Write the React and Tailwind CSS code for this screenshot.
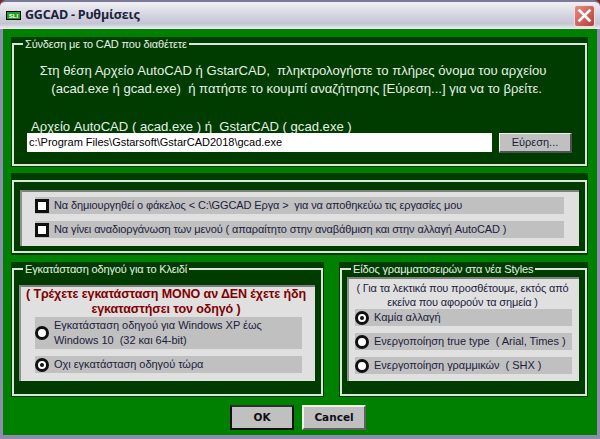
const Check = ({ label }) => (
  <div className="flex h-[17px] items-center bg-[#c0c0c0] tracking-[-0.12px] text-[#1c1c3c]">
    <span className="h-[14px] w-[14px] shrink-0 border-[3px] border-[#101010] bg-white" />
    <span className="ml-[5px] whitespace-pre">{label}</span>
  </div>
)

const Radio = ({ checked = false, lines }) => (
  <div className="flex items-center bg-[#c0c0c0] py-[1px] tracking-[-0.03px] text-[#1c1c3c]">
    <span className="flex h-[14px] w-[14px] shrink-0 items-center justify-center rounded-full border-[3px] border-[#101010] bg-white">
      {checked && <span className="h-[4px] w-[4px] rounded-full bg-[#101010]" />}
    </span>
    <span className="ml-[5px] whitespace-pre leading-[15px]">{lines}</span>
  </div>
)

const Group = ({ title, className = '', children }) => (
  <div className={`bg-[#003c00] px-[1px] pb-[1px] ${className}`}>
    <fieldset className="h-full border-2 border-[#dce6dc]">
      <legend className="ml-[9px] px-[2px] text-[11px] leading-[14px] tracking-[-0.15px] text-[#e8f0e8] whitespace-pre">{title}</legend>
      {children}
    </fieldset>
  </div>
)

const Panel = ({ className = '', children }) => (
  <div className={`border-t-2 border-l-2 border-t-[#808080] border-l-[#909090] bg-[#e0e0e0] ${className}`}>
    {children}
  </div>
)

const App = () => {
  return (
    <div className="flex h-[439px] w-[600px] flex-col overflow-hidden bg-[#8a2020] font-['Liberation_Sans',Arial,sans-serif] text-[11px]">
      <div className="flex h-[29px] shrink-0 items-center rounded-t-[6px] border-t-2 border-[#7a7a96] bg-gradient-to-b from-[#f0f0f4] via-[#c4c4d4] via-80% to-[#eeeef2] pl-[6px] pr-[5px]">
        <span className="flex h-[9px] w-[15px] items-center justify-center border border-black bg-[#20a020] text-[6px] font-bold leading-none text-white">SLI</span>
        <span className="ml-[4px] font-['Open_Sans',sans-serif] text-[12.5px] font-bold tracking-[-0.2px] text-[#20203c]">GGCAD - Ρυθμίσεις</span>
        <button className="ml-auto flex h-[22px] w-[21px] items-center justify-center rounded-[3px] border border-[#f0e0e0] bg-gradient-to-br from-[#e88a80] to-[#b83a3a]">
          <svg width="15" height="15" viewBox="0 0 15 15">
            <path d="M2.5 2.5 L12.5 12.5 M12.5 2.5 L2.5 12.5" stroke="#fff" strokeWidth="2.6" strokeLinecap="square" />
          </svg>
        </button>
      </div>

      <div className="flex flex-1 flex-col border-x-[3px] border-b-[4px] border-x-[#8c8cac] border-b-[#8c8cac] bg-[#008000] pl-[8px] pr-[5px] pt-[8px]">
        <Group title="Σύνδεση με το CAD που διαθέτετε" className="h-[130px] w-[577px]">
          <div className="pr-[13px] pt-[11px] text-center text-[13.1px] leading-[18px] text-[#e8f0e8] whitespace-pre">
            <p>Στη θέση Αρχείο AutoCAD ή GstarCAD,  πληκτρολογήστε το πλήρες όνομα του αρχείου</p>
            <p>  (acad.exe ή gcad.exe)  ή πατήστε το κουμπί αναζήτησης [Εύρεση...] για να το βρείτε.</p>
          </div>
          <p className="-mb-[1px] ml-[17px] mt-[22px] text-[13.1px] leading-[14px] text-[#e8f0e8] whitespace-pre">Αρχείο AutoCAD ( acad.exe ) ή  GstarCAD ( gcad.exe )</p>
          <div className="ml-[13px] flex gap-[7px]">
            <div className="flex h-[19px] w-[465px] items-center bg-white pl-[2px] text-black">c:\Program Files\Gstarsoft\GstarCAD2018\gcad.exe</div>
            <button className="h-[20px] w-[73px] border-b-2 border-r-2 border-t border-l border-b-[#505050] border-r-[#505050] border-t-[#f0f0f0] border-l-[#f0f0f0] bg-[#c0c0c0] text-[11px] text-[#1c1c3c]">Εύρεση...</button>
          </div>
        </Group>

        <div className="mt-[6px] h-[82px] w-[577px] bg-[#003c00] px-[1px] pb-[2px] pt-[7px]">
          <div className="h-full border-2 border-[#dce6dc] px-[6px] pb-[5px] pt-[8px]">
            <Panel className="flex h-[56px] flex-col gap-[7px] pl-[13px] pr-[15px] pt-[5px]">
              <Check label="Να δημιουργηθεί ο φάκελος < C:\GGCAD Εργα >  για να αποθηκεύω τις εργασίες μου" />
              <Check label="Να γίνει αναδιοργάνωση των μενού ( απαραίτητο στην αναβάθμιση και στην αλλαγή AutoCAD )" />
            </Panel>
          </div>
        </div>

        <div className="mt-[7px] flex h-[135px] w-[577px] gap-[15px]">
          <Group title="Εγκατάσταση οδηγού για το Κλειδί" className="w-[313px]">
            <Panel className="ml-[5px] mr-[6px] mt-[9px] h-[96px]">
              <div className="pr-[4px] text-center text-[12.5px] font-bold leading-[15px] tracking-[-0.1px] whitespace-nowrap text-[#800000]">
                <p>( Τρέχετε εγκατάσταση ΜΟΝΟ αν ΔΕΝ έχετε ήδη</p>
                <p>εγκαταστήσει τον οδηγό )</p>
              </div>
              <div className="flex flex-col gap-[7px] pl-[14px] pr-[13px]">
                <Radio lines={'Εγκατάσταση οδηγού για Windows XP έως\nWindows 10  (32 και 64-bit)'} />
                <Radio checked lines="Οχι εγκατάσταση οδηγού τώρα" />
              </div>
            </Panel>
          </Group>
          <Group title="Είδος γραμματοσειρών στα νέα Styles" className="w-[249px]">
            <Panel className="ml-[5px] mr-[6px] mt-[1px] h-[104px] pt-[2px]">
              <div className="pr-[3px] text-center text-[11px] leading-[14px] tracking-[-0.15px] whitespace-nowrap text-[#1c1c3c]">
                <p>( Για τα λεκτικά που προσθέτουμε, εκτός από</p>
                <p>εκείνα που αφορούν τα σημεία )</p>
              </div>
              <div className="flex flex-col gap-[7px] pl-[6px] pr-[7px]">
                <Radio checked lines="Καμία αλλαγή" />
                <Radio lines="Ενεργοποίηση true type  ( Arial, Times )" />
                <Radio lines="Ενεργοποίηση γραμμικών  ( SHX )" />
              </div>
            </Panel>
          </Group>
        </div>

        <div className="mt-[8px] flex justify-center gap-[8px] pr-[7px]">
          <button className="h-[25px] w-[64px] border-2 border-[#101010] border-t-[#303030] bg-[#c0c0c0] font-['DejaVu_Sans',sans-serif] text-[10.5px] font-bold text-[#101018]">OK</button>
          <button className="h-[25px] w-[64px] border-2 border-b-[#606060] border-r-[#606060] border-l-[#f0f4e8] border-t-[#f0f4e8] bg-[#c0c0c0] font-['DejaVu_Sans',sans-serif] text-[10.5px] font-bold text-[#101018]">Cancel</button>
        </div>
      </div>
    </div>
  )
}

export default App
